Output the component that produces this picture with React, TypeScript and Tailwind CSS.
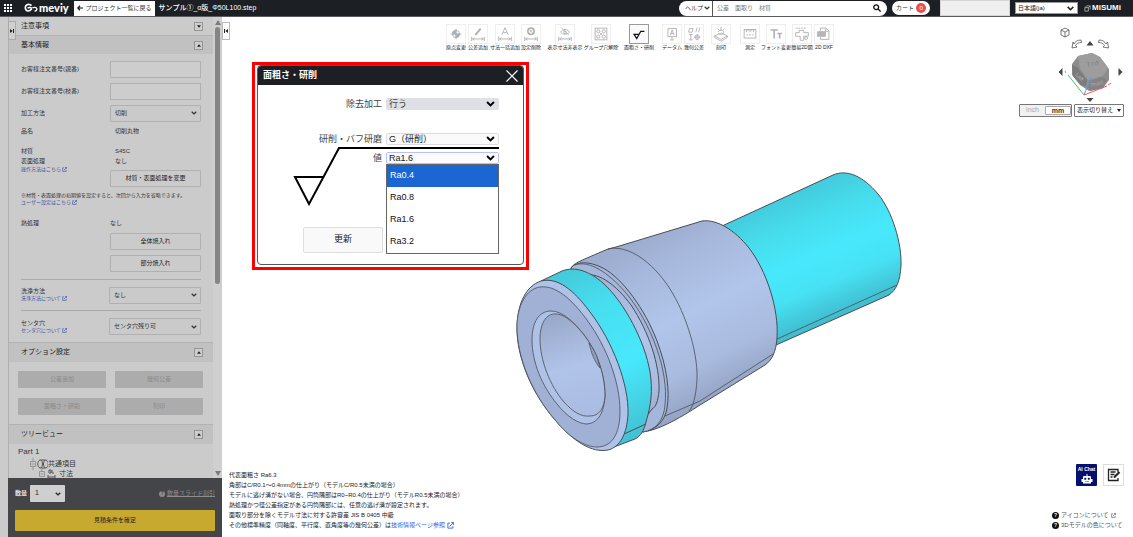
import type { ReactNode } from "react";

const FONT = "font-['Liberation_Sans','Noto_Sans_CJK_JP',sans-serif]";

function Chevron({ className = "" }: { className?: string }) {
  return (
    <svg viewBox="0 0 10 7" className={className} fill="none" stroke="currentColor" strokeWidth="2.2" aria-hidden="true">
      <path d="M1 1.2 5 5.2 9 1.2" />
    </svg>
  );
}

function External({ className = "" }: { className?: string }) {
  return (
    <svg viewBox="0 0 12 12" className={className} fill="none" stroke="currentColor" strokeWidth="1.5" aria-hidden="true">
      <path d="M5 2H1.5v8.5H10V7M7 1h4v4M11 1 4.5 7.5" />
    </svg>
  );
}

type SelectProps = { id: string; label?: string; value: string; options?: string[]; box: string; chevron?: string };

function Select({ id, label, value, options = [], box, chevron = "right-1 h-1 w-1.5" }: SelectProps) {
  return (
    <div className="relative flex min-w-0 flex-1">
      <select id={id} aria-label={label} defaultValue={value} className={`w-full appearance-none ${box}`}>
        {[value, ...options].map((o) => (
          <option key={o}>{o}</option>
        ))}
      </select>
      <span className="pointer-events-none absolute inset-y-0 right-0 flex items-center">
        <Chevron className={`relative ${chevron}`} />
      </span>
    </div>
  );
}

/* ---------- header ---------- */

function Header() {
  return (
    <header className="flex h-[17px] shrink-0 items-center border-b border-[#5a5c60] bg-[#1c2025] text-[7px] text-white">
      <button aria-label="メニュー" className="ml-1 h-2 w-2">
        <svg viewBox="0 0 8 8" className="block h-2 w-2" fill="#fff">
          {[0, 3, 6].map((y) => [0, 3, 6].map((x) => <rect key={`${x}${y}`} x={x} y={y} width="2" height="2" />))}
        </svg>
      </button>
      <a href="#home" className="ml-3 flex items-center">
        <svg viewBox="0 0 15 10" className="h-[10px] w-[15px]" fill="none" stroke="#fff" aria-hidden="true">
          <path d="M7.500 2.600C6 .9 3.200.8 1.900 2.800.7 4.700 1.400 7.200 3.400 7.900 5.200 8.400 6.600 7.200 7.800 5.800" strokeWidth="1.700" />
          <path d="M3.600 5.300C5 4 6.500 4.300 8 5.400M8.500 5C10 3.900 12.200 4.200 12.800 5.700c.4 1.400-.8 2.500-2.300 2.200" strokeWidth="1.400" />
        </svg>
        <span className="font-['Lato',sans-serif] text-[11px] leading-4 font-black">meviy</span>
      </a>
      <button className="ml-[5px] flex h-[15px] w-[81px] items-center justify-center gap-[3px] bg-white text-[6px] whitespace-nowrap text-[#333]">
        <svg viewBox="0 0 8 8" className="h-[6px] w-[6px]" fill="none" stroke="#111" strokeWidth="1.500" aria-hidden="true">
          <path d="M8 4H1M4 1 1 4l3 3" />
        </svg>
        プロジェクト一覧に戻る
      </button>
      <h1 className="ml-1 text-[7px] font-medium whitespace-nowrap">サンプル①_α版_Φ50L100.step</h1>
      <div className="ml-auto flex h-[15px] w-[208px] items-center rounded-full bg-white text-[6px] text-[#333]">
        <div className="flex h-full w-[34px] items-center border-r border-[#555] pl-1.5">
          <Select id="help" label="ヘルプ種別" value="ヘルプ" box="bg-white" chevron="right-0.5 h-1 w-1.5" />
        </div>
        <input aria-label="検索" placeholder="公差　面取り　材質" className="h-full min-w-0 flex-1 pl-1 placeholder:text-[#777] outline-none" />
        <button aria-label="検索する" className="mr-1.5">
          <svg viewBox="0 0 8 8" className="h-2 w-2" fill="none" stroke="#111" strokeWidth="1.300">
            <circle cx="3.200" cy="3.200" r="2.400" />
            <path d="m5 5 2.600 2.600" />
          </svg>
        </button>
      </div>
      <button className="ml-[5px] flex h-[14px] w-[38px] items-center justify-between rounded-full bg-white pr-1 pl-1 text-[6px] text-[#333]">
        カート
        <span className="flex h-[10px] w-[10px] items-center justify-center rounded-full bg-[#e8504f] text-[6px] text-white">0</span>
      </button>
      <div className="ml-[10px] h-4 w-[70px] border border-[#d5d5d5] bg-[#efefef]" />
      <div className="ml-[5px] flex w-[63px] text-[6px] text-[#222]">
        <Select id="lang" label="言語" value="日本語(ja)" box="h-[12px] border border-[#999] bg-white pl-0.5" chevron="right-1 h-[5px] w-[7px]" />
      </div>
      <a href="#misumi" className="mr-3 ml-[6px] flex items-center gap-px text-[8px] font-bold">
        <svg viewBox="0 0 8 8" className="h-[7px] w-[7px]" fill="none" stroke="#aaa" strokeWidth="1" aria-hidden="true">
          <path d="M1 3h4v4H1zM3 1h4v4M5 3l2-2M1 3l2-2" />
        </svg>
        MiSUMi
      </a>
    </header>
  );
}

/* ---------- sidebar ---------- */

function SectionHead({ title, open = true, box = "" }: { title: string; open?: boolean; box?: string }) {
  return (
    <h2 className={`flex items-center justify-between border-[#b2b2b2] pr-[10px] pl-3 text-[7px] text-[#222] ${box}`}>
      {title}
      <button aria-label={`${title}を開閉`} className="flex h-[9px] w-[9px] items-center justify-center border border-[#969696] bg-[#cdcdcd]">
        <svg viewBox="0 0 6 4" className="h-[3px] w-[4px]" fill="#222">
          <path d={open ? "M3 0 6 4H0z" : "M3 4 6 0H0z"} />
        </svg>
      </button>
    </h2>
  );
}

function Row({ label, children, box = "h-[22px] items-center", htmlFor }: { label: ReactNode; children: ReactNode; box?: string; htmlFor?: string }) {
  return (
    <div className={`flex ${box}`}>
      <label htmlFor={htmlFor} className="w-[89px] shrink-0 whitespace-nowrap">
        {label}
      </label>
      <div className="flex min-w-0 flex-1">{children}</div>
    </div>
  );
}

const sideBtn = "h-[17px] w-full rounded-[1px] border border-[#b0b0b0] bg-[#cbcbcb] text-[6px] text-[#222]";
const sideSelect = "h-[17px] rounded-[1px] border border-[#b0b0b0] bg-[#cacaca] pl-1 text-[6px]";
const optBtn = "h-[17px] rounded-[1px] bg-[#acacac] text-[6px] text-[#8b8b8b]";
const sideLink = "flex items-center gap-px text-[5px] leading-[7px] text-[#3c51a5]";

function Sidebar() {
  return (
    <aside className="relative flex w-[222px] shrink-0 bg-[#cbcbcb] pl-2 text-[6px] text-[#333]">
      <button aria-label="パネルを閉じる" className="absolute top-1 left-2 z-10 flex h-[19px] w-[8px] items-center justify-center border border-[#aaa] bg-[#cfcfcf]">
        <svg viewBox="0 0 6 6" className="h-1 w-1" fill="#222">
          <path d="M0 0 4 3 0 6zM4.500 0H6v6H4.500z" />
        </svg>
      </button>
      <div className="flex min-w-0 flex-1 flex-col">
        <div className="flex min-h-0 flex-1 border-l border-[#b0b0b0]">
          <div className="min-w-0 flex-1 overflow-hidden">
            <SectionHead title="注意事項" open={false} box="h-[19px] border-b" />
            <SectionHead title="基本情報" box="h-[18px] bg-[#c1c1c1]" />
            <div className="flex flex-col pr-3 pl-3">
              <Row label="お客様注文番号(親番)" htmlFor="parent" box="mt-1 h-[22px] items-center">
                <input id="parent" className="h-[17px] w-full border border-[#b0b0b0] bg-[#cdcdcd] px-1" />
              </Row>
              <Row label="お客様注文番号(枝番)" htmlFor="branch">
                <input id="branch" className="h-[17px] w-full border border-[#b0b0b0] bg-[#cdcdcd] px-1" />
              </Row>
              <Row label="加工方法" htmlFor="method">
                <Select id="method" value="切削" box={sideSelect} />
              </Row>
              <Row label="品名" box="h-[14px] items-center">
                <span className="pl-[5px]">切削丸物</span>
              </Row>
              <div className="mt-[7px] flex h-[46px]">
                <div className="w-[89px] shrink-0 pt-[1px]">
                  <p className="leading-[10px]">材質</p>
                  <p className="leading-[10px]">表面処理</p>
                  <a href="#method-help" className={sideLink}>
                    操作方法はこちら
                    <External className="h-[5px] w-[5px]" />
                  </a>
                </div>
                <div className="min-w-0 flex-1 pt-[1px]">
                  <p className="pl-[5px] leading-[10px]">S45C</p>
                  <p className="pl-[5px] leading-[10px]">なし</p>
                  <button className={`${sideBtn} mt-1 block`}>材質・表面処理を変更</button>
                </div>
              </div>
              <p className="text-[5px] leading-[8px] whitespace-nowrap">※材質・表面処理の初期値を設定すると、次回から入力を省略できます。</p>
              <a href="#user" className={sideLink}>
                ユーザー設定はこちら
                <External className="h-[5px] w-[5px]" />
              </a>
              <Row label="熱処理" box="mt-[8px] h-[18px] items-center">
                なし
              </Row>
              <div className="mt-px flex flex-col gap-[5px] pl-[89px]">
                <button className={sideBtn}>全体焼入れ</button>
                <button className={sideBtn}>部分焼入れ</button>
              </div>
              <hr className="mt-[7px] border-[#aaa]" />
              {[
                ["wash", "洗浄方法", "洗浄方法について", "なし"],
                ["center", "センタ穴", "センタ穴について", "センタ穴残り可"],
              ].map(([id, label, link, value], i) => (
                <div key={id} className={i === 0 ? "flex h-[31px] items-center border-b border-[#aaa]" : "flex h-[31px] items-center"}>
                  <div className="w-[88px]">
                    <label htmlFor={id} className="block leading-[7px]">
                      {label}
                    </label>
                    <a href={`#${id}-help`} className={sideLink}>
                      {link}
                      <External className="h-[5px] w-[5px]" />
                    </a>
                  </div>
                  <Select id={id} value={value} box={sideSelect} />
                </div>
              ))}
            </div>
            <SectionHead title="オプション設定" box="h-5 border-t bg-[#c1c1c1]" />
            <div className="grid grid-cols-2 gap-x-[9px] gap-y-[10px] py-[9px] pr-[10px] pl-[9px]">
              <button className={optBtn}>公差追加</button>
              <button className={optBtn}>幾何公差</button>
              <button className={optBtn}>面粗さ・研削</button>
              <button className={optBtn}>刻印</button>
            </div>
            <SectionHead title="ツリービュー" box="h-5 border-t bg-[#c1c1c1]" />
            <div className="pt-[2px] pl-[9px] text-[7px]">
              <p className="text-[8px] leading-[12px]">Part 1</p>
              <p className="flex h-[11px] items-center pl-[12px] leading-[11px]">
                <svg viewBox="0 0 18 12" className="h-[12px] w-[18px]" fill="none" stroke="#555" strokeWidth=".8" aria-hidden="true">
                  <path d="M.5 3.500h5v5h-5zM1.500 6h3M3 0v3.500M3 8.500V12" stroke="#888" />
                  <path d="M10 2c-3 1-3 7 0 8M16 2c3 1 3 7 0 8M11 2c2 2 2 6 0 8M15 2c-2 2-2 6 0 8M10 2h6M10 10h6" strokeWidth="1" />
                </svg>
                共通項目
              </p>
              <p className="flex h-[9px] items-center gap-[3px] pl-[21px] leading-[8px]">
                <svg viewBox="0 0 17 12" className="h-[12px] w-[17px]" fill="none" stroke="#555" strokeWidth=".8" aria-hidden="true">
                  <path d="M.5 3.500h5v5h-5zM1.500 6h3M3 0v3.500" stroke="#888" />
                  <path d="M9 7v4M16 7v4M9 9h7M10 2v3h2V2zM13 2v3h2" strokeWidth="1" />
                </svg>
                寸法
              </p>
            </div>
          </div>
          <div className="flex w-[9px] flex-col items-center justify-between bg-[#cfcfcf] pt-[3px] pb-[2px]">
            <svg viewBox="0 0 6 5" className="h-[5px] w-[6px] shrink-0" fill="#7a7a7a" aria-hidden="true">
              <path d="M3 0 6 5H0z" />
            </svg>
            <div className="mt-[2px] mb-auto h-[257px] w-[5px] rounded-full bg-[#858585]" />
            <svg viewBox="0 0 6 5" className="h-[5px] w-[6px] shrink-0" fill="#7a7a7a" aria-hidden="true">
              <path d="M3 5 6 0H0z" />
            </svg>
          </div>
        </div>
        <div className="h-[59px] shrink-0 bg-[#444548] px-[7px] pt-[7px]">
          <div className="flex items-center text-[#e2e2e2]">
            <label htmlFor="qty" className="w-[15px] font-bold whitespace-nowrap">
              数量
            </label>
            <div className="flex w-[35px] text-[#222]">
              <Select id="qty" value="1" box="h-[17px] rounded-[1px] bg-[#cfcfcf] pl-[5px] text-[7px]" />
            </div>
            <a href="#slide" className="ml-auto flex items-center gap-[2px] text-[#8c8c8c]">
              <span className="flex h-[6px] w-[6px] items-center justify-center rounded-full bg-[#8c8c8c] text-[5px] font-bold text-[#444548]">?</span>
              <span className="underline">数量スライド割引</span>
            </a>
          </div>
          <button className="mt-2 h-[21px] w-full rounded-[1px] bg-[#c8a92f] text-[6px] text-[#222]">見積条件を確定</button>
        </div>
      </div>
    </aside>
  );
}

/* ---------- toolbar ---------- */

const dim = "M3 13v5M17 13v5M4 15.500h12M6 14l-2 1.500L6 17M14 14l2 1.500-2 1.500";

const tools: { label: string; gap: string; icon: ReactNode; active?: boolean }[] = [
  { label: "原点変更", gap: "", icon: <><circle cx="10" cy="10" r="4" /><path d="M10 4v12M4 10h12" /><path d="M10 6v4H6a4 4 0 0 1 4-4zM10 14v-4h4a4 4 0 0 1-4 4z" fill="currentColor" /></> },
  { label: "公差追加", gap: "ml-[2px]", icon: <><path d={dim} /><path d="m7 11 6-7" strokeWidth="2.200" /></> },
  { label: "寸法一括追加", gap: "ml-[7px]", icon: <><path d={dim} /><path d="M6.500 11 10 3l3.500 8M8 8.500h4" /></> },
  { label: "設定削除", gap: "ml-[6px]", icon: <><path d={dim} /><circle cx="10" cy="7" r="3.500" strokeWidth="1.800" /><path d="m8.500 5.500 3 3M11.500 5.500l-3 3" /></> },
  { label: "表示寸法非表示", gap: "ml-[14px]", icon: <><path d={dim} /><path d="M5 8c3-4 7-4 10 0-3 3-7 3-10 0zM6 3l8 8" /><circle cx="10" cy="8" r="1.500" /></> },
  { label: "グループ穴解除", gap: "ml-[16px]", icon: <><rect x="3.500" y="3.500" width="13" height="13" /><circle cx="7" cy="7" r="1.800" /><circle cx="13" cy="7" r="1.800" /><circle cx="7" cy="13" r="1.800" /><circle cx="13" cy="13" r="1.800" /><path d="m9 9 2 2M11 9l-2 2" /></> },
  { label: "面粗さ・研削", gap: "ml-[18px]", active: true, icon: <path d="M4.500 10.500h5.500L7.500 15zM7.500 15 12 7h4" strokeWidth="1.400" /> },
  { label: "データム", gap: "ml-[13px]", icon: <><rect x="5.500" y="4" width="9.500" height="9" /><path d="M8 11.500 10.200 5.500l2.200 6M8.800 9.500h3M10 13v3M8 16.500h4" /></> },
  { label: "幾何公差", gap: "ml-[2px]", icon: <><path d="M5 4h4L8 8H4zM12 8l1.500-5M15 8l1.500-5M6.500 10.500v6M4.500 16.500h4M4.500 10.500h4" /><circle cx="13.500" cy="13.500" r="2.500" /><path d="M13.500 10v7M10 13.500h7" /></> },
  { label: "刻印", gap: "ml-[7px]", icon: <><path d="M3 12l7-3 7 3-7 4zM3 12v2l7 4 7-4v-2" /><path d="M7 8c0-3 6-3 6 0s-5 3-6 1M10 2v4M6 4l2 2M14 4l-2 2" /></> },
  { label: "測定", gap: "ml-[9px]", icon: <><rect x="3.500" y="5" width="13" height="9.500" /><path d="M6 5v3M8 5v2M10 5v3M12 5v2M14 5v3M6 11h2M9 11h2M12 11h2" /></> },
  { label: "フォント変更", gap: "ml-[6px]", icon: <path d="M4 5.500h8M8 5.500V15M11.500 9.500h5M14 9.500V15" strokeWidth="1.800" /> },
  { label: "簡易2D図", gap: "ml-[6px]", icon: <><path d="M3 8.500h4V6h5v2.500h5v4h-5V17H8v-4.500H3z" /><circle cx="14.500" cy="14.500" r="1.600" /><path d="M3 3.500h2M6 3.500h2M9 3.500h2M12 3.500h2" /></> },
  { label: "2D DXF", gap: "ml-[2px]", icon: <><path d="M6 7V3.500h6l3.500 3V16H6v-2.500M12 3.500V7h3" /><rect x="3" y="7.500" width="8.500" height="5" fill="#b7b7b7" /></> },
];

function Toolbar() {
  return (
    <div role="toolbar" aria-label="編集" className="flex pt-[7px] pl-[224px]">
      {tools.map((t) => (
        <button key={t.label} className={`flex w-[20px] shrink-0 flex-col items-center ${t.gap}`}>
          <span className={t.active ? "border border-[#999] bg-[#fafafa] text-[#111]" : "border border-[#eee] text-[#b0b0b0]"}>
            <svg viewBox="0 0 20 20" className="block h-[18px] w-[18px]" fill="none" stroke="currentColor" aria-hidden="true">
              {t.icon}
            </svg>
          </span>
          <span className="text-[5px] leading-[7px] whitespace-nowrap text-[#222]">{t.label}</span>
        </button>
      ))}
    </div>
  );
}

/* ---------- 3D model ---------- */

function Model() {
  return (
    <svg viewBox="510 165 400 295" className="absolute top-[148px] left-[288px] h-[295px] w-[400px]" stroke="#4a4d55" strokeLinejoin="round" fill="none" role="img" aria-label="3Dモデル">
      <defs>
        <linearGradient id="cy" gradientUnits="userSpaceOnUse" x1="780" y1="198" x2="832" y2="322">
          <stop offset="0" stopColor="#43cbdc" />
          <stop offset=".22" stopColor="#46dcec" />
          <stop offset=".5" stopColor="#48e8fc" />
          <stop offset=".72" stopColor="#47e2f4" />
          <stop offset="1" stopColor="#3fb9cb" />
        </linearGradient>
        <linearGradient id="body" gradientUnits="userSpaceOnUse" x1="650" y1="236" x2="727" y2="390">
          <stop offset="0" stopColor="#9dadd0" />
          <stop offset=".2" stopColor="#a7b9dd" />
          <stop offset=".5" stopColor="#b1c5ea" />
          <stop offset=".8" stopColor="#a9bbdf" />
          <stop offset="1" stopColor="#95a5c6" />
        </linearGradient>
        <linearGradient id="ring" gradientUnits="userSpaceOnUse" x1="555" y1="272" x2="635" y2="442">
          <stop offset="0" stopColor="#44c8d8" />
          <stop offset=".25" stopColor="#46deef" />
          <stop offset=".6" stopColor="#48e8fc" />
          <stop offset="1" stopColor="#41bfd0" />
        </linearGradient>
        <linearGradient id="bore" gradientUnits="userSpaceOnUse" x1="555" y1="312" x2="590" y2="420">
          <stop offset="0" stopColor="#98a7c8" />
          <stop offset=".5" stopColor="#b0c3e9" />
          <stop offset="1" stopColor="#a9bbe0" />
        </linearGradient>
      </defs>
      <path fill="url(#cy)" d="M722 226 833 175C847 169 863 176 878 194 892 211 902 243 901 266 900 282 896 290 889 295L776 345Z" />
      <path d="M777 339 897 285" strokeWidth=".8" />
      <path fill="url(#body)" d="M571 268C574 263 580 261 608 249L616 247 702 221C716 219 734 229 749 248 766 270 779 308 777 338 776 352 772 360 765 365L700 405C680 418 665 426 652 430L638 433Z" />
      <path strokeWidth=".8" d="M608 249C625 245 647 257 666 283 684 308 698 350 697 379 696 397 693 407 689 411M665 416 700 401 773 354" />
      <path fill="#a4b6da" d="M571 268C576 261 589 261 603 268 622 278 645 309 657 341 667 367 670 392 667 408 665 421 656 430 643 432L632 420Z" />
      <path strokeWidth=".8" d="M575 265C589 260 608 272 626 293 651 323 669 371 665 405 664 418 658 427 648 431" />
      <path fill="url(#body)" d="M586 275C600 273 616 285 631 305 649 332 660 365 659 391 658 401 656 407 652 409L641 424Z" />
      <path fill="url(#ring)" d="M541 281 562 271C575 266 589 271 603 283 625 303 645 342 650 372 653 391 651 405 646 422 644 430 641 436 635 439L614 447Z" />
      <path fill="#afc2e8" d="M541 281C526 286 518 303 517 325 516 357 532 394 556 421 574 442 592 453 608 450 620 447 627 434 628 414 629 385 613 342 590 312 573 289 557 277 541 281Z" />
      <path d="M624 434 646 424" />
      <path strokeWidth=".8" fill="#a0b1d5" d="M540 287C526 289 517 306 517 327 517 357 532 394 556 421 568 436 584 447 597 447 612 447 620 434 620 411 620 383 607 347 587 320 571 298 555 285 540 287Z" />
      <path strokeWidth=".8" fill="#aec1e6" d="M551 311C539 311 532 322 532 340 532 362 542 386 557 404 567 417 579 424 587 424 598 423 604 413 605 396 605 372 595 347 580 330 570 318 560 311 551 311Z" />
      <path strokeWidth=".8" fill="url(#bore)" d="M556 314C546 313 540 324 540 339 540 360 550 386 564 402 573 412 581 417 590 416 599 416 604 409 605 396 605 372 595 347 580 330 571 320 563 314 556 314Z" />
      <path fill="#8e9dbe" strokeWidth=".7" d="M589 343C591 352 594 361 600 368L598 360C596 353 593 348 589 343Z" />
    </svg>
  );
}

function ViewCube() {
  return (
    <svg viewBox="1055 25 75 78" className="absolute top-2 right-[3px] h-[78px] w-[75px]" fill="none" role="img" aria-label="ビューキューブ">
      <g stroke="#555" strokeWidth=".8">
        <path d="m1065 28 4 2v5l-4 2-4-2v-5zM1061 30l4 2 4-2M1065 32v5" />
        <path d="M1081 40c-4 0-6 2-7 4l-1-2-1 6 5-1-1.500-1.500c1-2 3-3 6-3zM1099 40c4 0 6 2 7 4l1.500-2 1 6-5.500-1 1.500-1.500c-1-2-3-3-6-3z" />
      </g>
      <path fill="#444" d="m1090 41 3.500 4.500h-7zM1090 102l-3.500-4h7zM1058.500 72l4-4v8zM1122.500 72l-4-4v8z" />
      <path fill="#8d8d8d" d="m1078 56 14-3 8 4 9 12v11l-6 8-14 3-9-6-8-10v-11z" />
      <path fill="#9d9d9d" d="m1078 56 14-3 8 4 8 11-5 8-15 4-8-12z" />
      <path fill="#7b7b7b" d="m1072 65 5 2 10 13-1 6-5-1-8-9z" />
      <path fill="#838383" d="m1089 81 14-4 4 3-4 8-13 3-2-4z" />
      <g fill="#747474" fontFamily="Liberation Sans" fontWeight="bold" stroke="#c4c4c4" strokeWidth=".2">
        <text x="1087" y="67" fontSize="7" transform="rotate(-12 1087 67)">Top</text>
        <text x="1075" y="75" fontSize="5" transform="rotate(45 1075 75)">Left</text>
        <text x="1091" y="87" fontSize="5" transform="rotate(-14 1091 87)">Front</text>
      </g>
      <path stroke="#4bc46e" d="m1068 75 16 20M1065 71l1 2" />
      <path stroke="#5b9ae0" d="m1084 95 7-18" />
      <path stroke="#ee5c5c" d="m1084 95 23-9M1108 85l3-2" />
    </svg>
  );
}

/* ---------- dialog ---------- */

const values = ["Ra0.4", "Ra0.8", "Ra1.6", "Ra3.2"];
const dialogLabel = "w-[128px] shrink-0 pr-[4px] text-right whitespace-nowrap leading-[12px]";
const dialogChevron = "right-[4px] h-[6px] w-[9px] text-black";

function Dialog() {
  return (
    <div className="absolute top-[45px] left-[30px] w-[277px] border-[3px] border-[#fe0000] bg-white px-[2px] pb-[2px]">
      <section role="dialog" aria-label="面粗さ・研削" className="relative rounded-[4px] border border-[#54575b] bg-white text-[9px] text-[#444]">
        <header className="flex h-[19px] items-center justify-between rounded-t-[3px] bg-[#1c2025] pr-[5px] pl-[5px] text-white">
          <h2 className="text-[9px] font-bold">面粗さ・研削</h2>
          <button aria-label="閉じる">
            <svg viewBox="0 0 12 12" className="block h-3 w-3" stroke="#fff" strokeWidth="1.200">
              <path d="m.5.5 11 11M11.500.5l-11 11" />
            </svg>
          </button>
        </header>
        <svg viewBox="0 0 206 60" className="absolute top-[80px] left-[35px] h-[60px] w-[206px]" fill="none" stroke="#000" strokeWidth="2" aria-hidden="true">
          <path d="M31 31H2l14 27L46 2h160" />
        </svg>
        <div className="flex flex-col pt-[13px] pr-[24px]">
          <div className="flex h-[12px] items-center">
            <label htmlFor="removal" className={dialogLabel}>除去加工</label>
            <Select id="removal" value="行う" box="h-[12px] rounded-[2px] bg-[#dfe0e5] pl-[3px] leading-[12px]" chevron={dialogChevron} />
          </div>
          <div className="mt-[23px] flex h-[12px] items-center">
            <label htmlFor="grind" className={dialogLabel}>研削・バフ研磨</label>
            <Select id="grind" value="G（研削）" box="h-[12px] rounded-[2px] border border-[#ddd] bg-[#fafafa] pl-[2px] leading-[10px] text-[#222]" chevron={dialogChevron} />
          </div>
          <div className="mt-[7px] flex h-[12px] items-center">
            <label htmlFor="ra" className={dialogLabel}>値</label>
            <Select id="ra" value="Ra1.6" options={["Ra0.4", "Ra0.8", "Ra3.2"]} box="h-[12px] rounded-[2px] border border-[#b9c0f5] bg-[#fafaff] pl-[2px] leading-[10px] text-[#222]" chevron={dialogChevron} />
          </div>
        </div>
        <ul role="listbox" aria-label="値" className="absolute top-[98px] right-[24px] left-[128px] border border-[#666] bg-white text-[#111]">
          {values.map((v, i) => (
            <li key={v} role="option" aria-selected={i === 0} className={i === 0 ? "flex h-[22px] items-center bg-[#1a66d2] pl-[3px] text-white" : "flex h-[22px] items-center pl-[3px]"}>
              {v}
            </li>
          ))}
        </ul>
        <div className="pt-[63px] pb-[11px] pl-[45px]">
          <button className="block h-[26px] w-[80px] rounded-[2px] border border-[#ddd] bg-[#f9f9f9] text-[#222]">更新</button>
        </div>
      </section>
    </div>
  );
}

/* ---------- viewport ---------- */

const notes = [
  "代表面粗さ Ra6.3",
  "角部はC/R0.1～0.4mmの仕上がり（モデルC/R0.5未満の場合）",
  "モデルに逃げ溝がない場合、円筒隅部はR0~R0.4の仕上がり（モデルR0.5未満の場合）",
  "熱処理かつ径公差指定がある円筒隅部には、任意の逃げ溝が設定されます。",
  "面取り部分を除くモデル寸法に対する許容差 JIS B 0405 中級",
];

function Viewport() {
  return (
    <main className="relative min-w-0 flex-1 overflow-hidden bg-white">
      <Toolbar />
      <button aria-label="サイドバー" className="absolute top-[5px] left-0 flex h-[18px] w-[8px] items-center justify-center border border-[#bbb] bg-white">
        <svg viewBox="0 0 6 6" className="h-1 w-1" fill="#222">
          <path d="M6 0 2 3l4 3zM0 0h1.500v6H0z" />
        </svg>
      </button>
      <Model />
      <ViewCube />
      <div className="absolute top-[87px] right-[9px] flex h-[13px] gap-[2px] text-[6px]">
        <div className="flex w-[53px] items-center rounded-[1px] border border-[#777] bg-[#f1f1f1]">
          <button className="flex-1 text-[7px] text-[#aaa]">inch</button>
          <button className="h-[9px] w-[26px] rounded-[1px] border border-[#aaa] bg-white text-[7px] leading-[7px] font-bold text-[#333]">mm</button>
        </div>
        <button className="flex w-[50px] items-center justify-between rounded-[1px] border border-[#777] pr-[2px] pl-[2px] text-[#222]">
          表示切り替え
          <svg viewBox="0 0 4 3" className="h-[3px] w-1" fill="#222" aria-hidden="true">
            <path d="M0 0h4L2 3z" />
          </svg>
        </button>
      </div>
      <Dialog />
      <div className="absolute bottom-[7px] left-[7px] text-[6px] leading-[10px] whitespace-nowrap text-[#222]">
        {notes.map((n) => (
          <p key={n}>{n}</p>
        ))}
        <p className="flex items-center">
          その他標準精度（同軸度、平行度、直角度等の幾何公差）は
          <a href="#tech" className="flex items-center gap-[2px] text-[#2f5fe0]">
            技術情報ページ参照
            <External className="h-[7px] w-[7px]" />
          </a>
        </p>
      </div>
      <div className="absolute right-[9px] bottom-[51px] flex gap-[6px]">
        <button className="flex h-[22px] w-[21px] flex-col items-center justify-between rounded-[1px] bg-[#04106e] pt-[2px] pb-[2px] text-[5px] leading-[7px] font-bold whitespace-nowrap text-white">
          AI Chat
          <svg viewBox="0 0 12 10" className="h-[10px] w-[12px]" fill="#fff" aria-hidden="true">
            <path d="M5.500 0h1v2H9a1 1 0 0 1 1 1v2h1.500v3H10v1.500H2V8H.5V5H2V3a1 1 0 0 1 1-1h2.500z" />
            <path d="M3.500 4h1.500v1.500H3.500zM7 4h1.500v1.500H7zM4 7.500h4" fill="#04106e" stroke="#04106e" strokeWidth=".4" />
          </svg>
        </button>
        <button aria-label="メモ" className="flex h-[22px] w-[21px] items-center justify-center border border-[#ddd] bg-white">
          <svg viewBox="0 0 14 14" className="h-[14px] w-[14px]" fill="none" stroke="#222" strokeWidth="1.300">
            <path d="M11 4V1.500H1.500v11H11V10M3.500 4h5M3.500 6.500h4M3.500 9h2" />
            <path d="M7 9.500 12.500 4" strokeWidth="2.200" />
          </svg>
        </button>
      </div>
      <div className="absolute right-[9px] bottom-[7px] w-[72px] text-[6px] leading-[10px] whitespace-nowrap text-[#555]">
        {["アイコンについて", "3Dモデルの色について"].map((t, i) => (
          <a key={t} href={`#about-${i}`} className="flex items-center gap-[2px]">
            <span className="flex h-[7px] w-[7px] items-center justify-center rounded-full bg-[#111] text-[5px] font-bold text-white">?</span>
            {t}
            {i === 0 && <External className="h-[5px] w-[5px]" />}
          </a>
        ))}
      </div>
    </main>
  );
}

export default function App() {
  return (
    <div className={`flex h-screen flex-col overflow-hidden bg-white ${FONT}`}>
      <Header />
      <div className="flex min-h-0 flex-1">
        <Sidebar />
        <Viewport />
      </div>
    </div>
  );
}
